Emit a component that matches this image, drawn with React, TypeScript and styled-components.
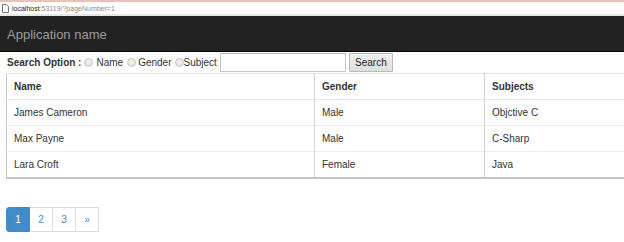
import React from "react";
import styled, { createGlobalStyle } from "styled-components";

const Global = createGlobalStyle`
  html, body { margin: 0; padding: 0; background: #fff; overflow: hidden; }
  body {
    font-family: "Liberation Sans", Arial, sans-serif;
    font-size: 10px;
    color: #333;
  }
  * { box-sizing: border-box; }
`;

const Page = styled.div`
  width: 624px;
  height: 242px;
  overflow: hidden;
`;

const AddressBar = styled.div`
  height: 16px;
  border-top: 2px solid #e7c2b6;
  border-bottom: 2px solid #e6e6e6;
  display: flex;
  align-items: center;
  gap: 3px;
  padding-left: 2px;
  font-family: "Liberation Sans", Arial, sans-serif;
  font-size: 7px;
  color: #8a8a8a;
  background: #fff;
`;

const Host = styled.span`
  color: #222;
`;

const Navbar = styled.div`
  height: 36px;
  background: #222;
  display: flex;
  align-items: center;
  padding-left: 7px;
  border-bottom: 1px solid #080808;
`;

const Brand = styled.span`
  font-size: 13px;
  color: #9d9d9d;
  padding-top: 2px;
`;

const SearchRow = styled.form`
  height: 21px;
  display: flex;
  align-items: center;
  padding-left: 7px;
  margin: 0;
`;

const OptionLabel = styled.span`
  font-weight: bold;
  margin-right: 3px;
`;

const Radio = styled.input.attrs({ type: "radio" })<{ $gap?: number }>`
  appearance: none;
  -webkit-appearance: none;
  width: 9px;
  height: 9px;
  margin: 0 ${(p) => p.$gap ?? 3}px 0 0;
  border-radius: 50%;
  border: 1px solid #c4c4c4;
  background: radial-gradient(circle at 50% 40%, #f4f4f4, #d9d9d9);
`;

const RadioText = styled.span<{ $after?: number }>`
  margin-right: ${(p) => p.$after ?? 4}px;
`;

const TextBox = styled.input`
  width: 126px;
  height: 19px;
  margin-left: 3px;
  border: 1px solid #c8c8c8;
  border-top-color: #b8b8b8;
  background: #fff;
  padding: 0 3px;
  font-size: 10px;
`;

const Button = styled.button`
  width: 44px;
  height: 19px;
  margin-left: 3px;
  border: 1px solid #b9b9b9;
  border-radius: 1px;
  background: linear-gradient(#eeeeee, #dedede);
  font-family: "Liberation Sans", Arial, sans-serif;
  font-size: 10px;
  color: #222;
  padding: 0;
`;

const Table = styled.table`
  margin-left: 6px;
  width: 700px;
  border-collapse: collapse;
  border-left: 1px solid #c9c9c9;
  border-top: 1px solid #e4e4e4;
  border-bottom: 2px solid #c4c4c4;
  table-layout: fixed;
`;

const Th = styled.th<{ $w?: number }>`
  text-align: left;
  font-weight: bold;
  padding: 6px 7px;
  line-height: 13px;
  border-right: 1px solid #d4d4d4;
  border-bottom: 1px solid #e6e6e6;
  width: ${(p) => (p.$w ? `${p.$w}px` : "auto")};
`;

const Td = styled.td`
  padding: 6px 7px;
  line-height: 13px;
  border-right: 1px solid #d4d4d4;
  border-top: 1px solid #ececec;
`;

const Pager = styled.ul`
  list-style: none;
  display: flex;
  margin: 28px 0 0 6px;
  padding: 0;
`;

const PageItem = styled.li<{ $active?: boolean; $first?: boolean }>`
  width: 24px;
  height: 25px;
  margin-left: ${(p) => (p.$first ? 0 : -1)}px;
  display: flex;
  align-items: center;
  justify-content: center;
  border: 1px solid ${(p) => (p.$active ? "#428bca" : "#dddddd")};
  background: ${(p) => (p.$active ? "#428bca" : "#fff")};
  color: ${(p) => (p.$active ? "#fff" : "#428bca")};
  border-radius: ${(p) => (p.$first ? "3px 0 0 3px" : "0")};
  font-size: 10px;
  position: relative;
  z-index: ${(p) => (p.$active ? 1 : 0)};
`;

const rows = [
  { name: "James Cameron", gender: "Male", subject: "Objctive C" },
  { name: "Max Payne", gender: "Male", subject: "C-Sharp" },
  { name: "Lara Croft", gender: "Female", subject: "Java" },
];

const PageIcon = () => (
  <svg width="7" height="9" viewBox="0 0 7 9">
    <path d="M0.5 0.5 H4.5 L6.5 2.5 V8.5 H0.5 Z" fill="#fff" stroke="#777" strokeWidth="1" />
  </svg>
);

export default function App() {
  return (
    <Page>
      <Global />
      <AddressBar>
        <PageIcon />
        <span>
          <Host>localhost</Host>:53119/?pageNumber=1
        </span>
      </AddressBar>
      <Navbar>
        <Brand>Application name</Brand>
      </Navbar>
      <SearchRow onSubmit={(e) => e.preventDefault()}>
        <OptionLabel>Search Option :</OptionLabel>
        <Radio name="opt" />
        <RadioText $after={4}>Name</RadioText>
        <Radio name="opt" $gap={2} />
        <RadioText $after={3}>Gender</RadioText>
        <Radio name="opt" $gap={0} />
        <RadioText $after={0}>Subject</RadioText>
        <TextBox type="text" />
        <Button type="submit">Search</Button>
      </SearchRow>
      <Table>
        <thead>
          <tr>
            <Th $w={308}>Name</Th>
            <Th $w={170}>Gender</Th>
            <Th>Subjects</Th>
          </tr>
        </thead>
        <tbody>
          {rows.map((r) => (
            <tr key={r.name}>
              <Td>{r.name}</Td>
              <Td>{r.gender}</Td>
              <Td>{r.subject}</Td>
            </tr>
          ))}
        </tbody>
      </Table>
      <Pager>
        <PageItem $active $first>1</PageItem>
        <PageItem>2</PageItem>
        <PageItem>3</PageItem>
        <PageItem>»</PageItem>
      </Pager>
    </Page>
  );
}
